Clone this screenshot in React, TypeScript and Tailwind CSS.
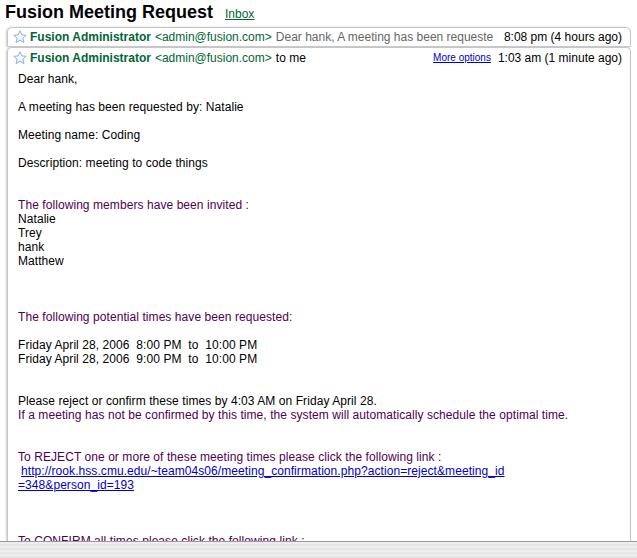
import React from 'react';

type Line = { text: string; color?: 'purple' | 'link'; indent?: boolean };

const lines: Line[] = [
  { text: 'Dear hank,' },
  { text: '' },
  { text: 'A meeting has been requested by: Natalie' },
  { text: '' },
  { text: 'Meeting name: Coding' },
  { text: '' },
  { text: 'Description: meeting to code things' },
  { text: '' },
  { text: '' },
  { text: 'The following members have been invited :', color: 'purple' },
  { text: 'Natalie' },
  { text: 'Trey' },
  { text: 'hank' },
  { text: 'Matthew' },
  { text: '' },
  { text: '' },
  { text: '' },
  { text: 'The following potential times have been requested:', color: 'purple' },
  { text: '' },
  { text: 'Friday April 28, 2006  8:00 PM  to  10:00 PM' },
  { text: 'Friday April 28, 2006  9:00 PM  to  10:00 PM' },
  { text: '' },
  { text: '' },
  { text: 'Please reject or confirm these times by 4:03 AM on Friday April 28.' },
  { text: 'If a meeting has not be confirmed by this time, the system will automatically schedule the optimal time.', color: 'purple' },
  { text: '' },
  { text: '' },
  { text: 'To REJECT one or more of these meeting times please click the following link :', color: 'purple' },
  { text: 'http://rook.hss.cmu.edu/~team04s06/meeting_confirmation.php?action=reject&meeting_id', color: 'link', indent: true },
  { text: '=348&person_id=193', color: 'link' },
  { text: '' },
  { text: '' },
  { text: '' },
  { text: 'To CONFIRM all times please click the following link :', color: 'purple' },
  { text: '' },
];

const Star: React.FC = () => (
  <svg width="14" height="14" viewBox="0 0 14 14" className="shrink-0">
    <defs>
      <linearGradient id="starfill" x1="0" y1="0" x2="0" y2="1">
        <stop offset="0" stopColor="#ffffff" />
        <stop offset="1" stopColor="#e6eefa" />
      </linearGradient>
    </defs>
    <polygon
      points="7,0.8 8.9,4.9 13.2,5.3 9.9,8.2 10.9,12.6 7,10.3 3.1,12.6 4.1,8.2 0.8,5.3 5.1,4.9"
      fill="url(#starfill)"
      stroke="#8fb0e0"
      strokeWidth="1"
      strokeLinejoin="round"
    />
  </svg>
);

const Sender: React.FC = () => (
  <>
    <span className="font-bold text-[#006633]">Fusion Administrator</span>
    <span className="ml-[4px] text-[#006633]">&lt;admin@fusion.com&gt;</span>
  </>
);

export default function App() {
  return (
    <div className="h-[558px] flex flex-col overflow-hidden bg-white text-black text-[12px] font-['Liberation_Sans',Arial,sans-serif]">
      {/* title */}
      <div className="h-[27px] pl-[5px] pt-[1px] flex items-baseline shrink-0">
        <h1 className="text-[18px] leading-[22px] font-bold">Fusion Meeting Request</h1>
        <a href="#" className="ml-[12px] text-[12px] text-[#006633] underline">Inbox</a>
      </div>

      {/* conversation */}
      <div className="flex-1 min-h-0 flex flex-col pl-[7px] pr-[6px]">
        <div className="h-[20px] shrink-0 flex items-center pl-[5px] pr-[8px] border border-[#c6c6c6] rounded-t-[5px] shadow-[-1px_0_2px_#cfcfcf] whitespace-nowrap overflow-hidden">
          <Star />
          <span className="ml-[3px]"><Sender /></span>
          <span className="ml-[4px] flex-1 min-w-0 overflow-hidden text-[#666666]">Dear hank, A meeting has been requeste</span>
          <span className="ml-[9px]">8:08 pm (4 hours ago)</span>
        </div>

        <div className="flex-1 min-h-0 flex flex-col border-x border-t border-[#c6c6c6] rounded-t-[5px] shadow-[-1px_0_2px_#cfcfcf] overflow-hidden">
          <div className="h-[19px] shrink-0 flex items-center pl-[5px] pr-[8px] whitespace-nowrap">
            <Star />
            <span className="ml-[3px]"><Sender /></span>
            <span className="ml-[4px] flex-1">to me</span>
            <a href="#" className="text-[10px] text-[#0000cc] underline">More options</a>
            <span className="ml-[7px]">1:03 am (1 minute ago)</span>
          </div>
          <div className="pl-[10px] pt-[5px] leading-[14px] tracking-[0.07px]">
            {lines.map((l, i) =>
              l.text === '' ? (
                <div key={i} className="h-[14px]" />
              ) : l.color === 'link' ? (
                <div key={i} className={`whitespace-pre ${l.indent ? 'pl-[3px]' : ''}`}>
                  <a href="#" className="text-[#0000cc] underline">{l.text}</a>
                </div>
              ) : (
                <div key={i} className={`whitespace-pre ${l.color === 'purple' ? 'text-[#500050]' : ''}`}>
                  {l.text}
                </div>
              )
            )}
          </div>
        </div>
      </div>

      {/* bottom bar */}
      <div className="h-[17px] shrink-0 border-t border-[#9a9a9a] bg-[repeating-linear-gradient(180deg,#eeeeee_0px,#eeeeee_2px,#e6e6e6_2px,#e6e6e6_4px)]" />
    </div>
  );
}
